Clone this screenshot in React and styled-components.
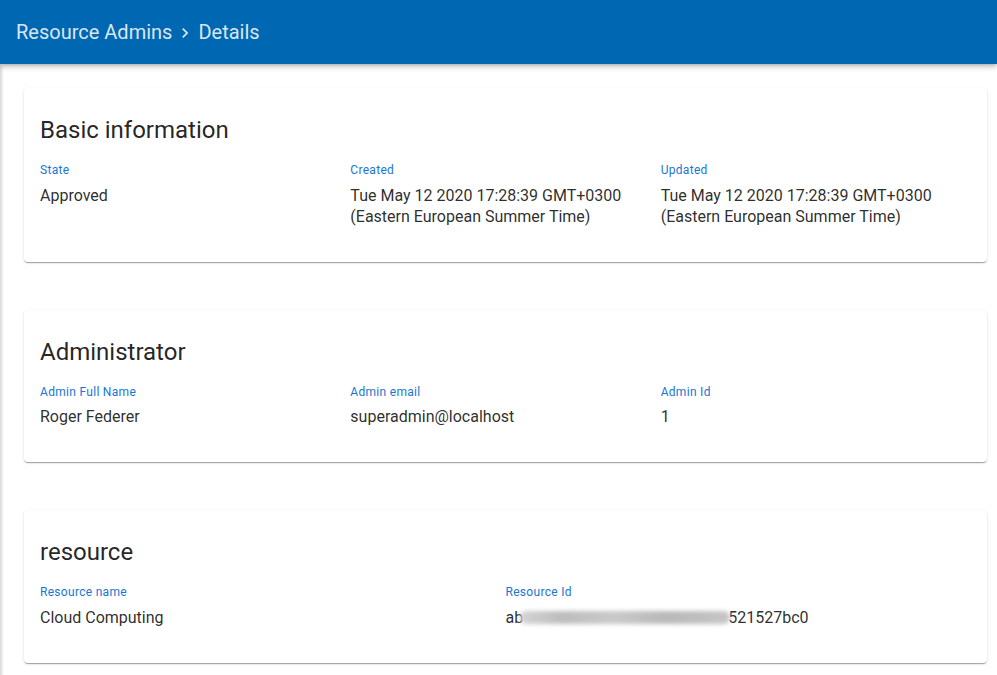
import React from "react";
import styled, { createGlobalStyle } from "styled-components";
import { MdChevronRight } from "react-icons/md";

const GlobalStyle = createGlobalStyle`
  html, body {
    margin: 0;
    padding: 0;
    background: #ffffff;
    font-family: Roboto, "Liberation Sans", Arial, sans-serif;
  }
`;

const sections = [
  {
    title: "Basic information",
    columns: 3,
    fields: [
      { label: "State", value: "Approved" },
      {
        label: "Created",
        value: "Tue May 12 2020 17:28:39 GMT+0300 (Eastern European Summer Time)",
      },
      {
        label: "Updated",
        value: "Tue May 12 2020 17:28:39 GMT+0300 (Eastern European Summer Time)",
      },
    ],
  },
  {
    title: "Administrator",
    columns: 3,
    fields: [
      { label: "Admin Full Name", value: "Roger Federer" },
      { label: "Admin email", value: "superadmin@localhost" },
      { label: "Admin Id", value: "1" },
    ],
  },
  {
    title: "resource",
    columns: 2,
    fields: [
      { label: "Resource name", value: "Cloud Computing" },
      { label: "Resource Id", hidden: true },
    ],
  },
];

const App = () => {
  return (
    <Page>
      <GlobalStyle />
      <AppBar>
        <Crumb>Resource Admins</Crumb>
        <Separator>
          <MdChevronRight size={20} />
        </Separator>
        <Crumb>Details</Crumb>
      </AppBar>
      <Main>
        {sections.map((section) => (
          <Card key={section.title}>
            <CardTitle>{section.title}</CardTitle>
            <FieldGrid columns={section.columns}>
              {section.fields.map((field) => (
                <Field key={field.label}>
                  <Label>{field.label}</Label>
                  {field.hidden ? (
                    <Value>
                      <span>ab</span>
                      <Redacted />
                      <span>521527bc0</span>
                    </Value>
                  ) : (
                    <Value>{field.value}</Value>
                  )}
                </Field>
              ))}
            </FieldGrid>
          </Card>
        ))}
      </Main>
    </Page>
  );
};

export default App;

const Page = styled.div`
  width: 100%;
  min-height: 100vh;
  display: flex;
  flex-direction: column;
`;

const AppBar = styled.header`
  height: 64px;
  background-color: #0067b2;
  display: flex;
  align-items: center;
  padding: 0 16px;
  color: rgba(255, 255, 255, 0.86);
  box-shadow: 0 2px 4px -1px rgba(0, 0, 0, 0.2), 0 4px 5px 0 rgba(0, 0, 0, 0.14);
  position: relative;
  z-index: 2;
`;

const Crumb = styled.span`
  font-size: 20px;
  font-weight: 400;
  line-height: 1;
`;

const Separator = styled.span`
  display: flex;
  align-items: center;
  margin: 2px 3px 0 3px;
`;

const Main = styled.main`
  flex: 1;
  display: flex;
  flex-direction: column;
  gap: 48px;
  padding: 24px 10px 24px 24px;
  box-shadow: inset 3px 0 3px -1px rgba(0, 0, 0, 0.16);
`;

const Card = styled.section`
  background: #ffffff;
  border-radius: 4px;
  padding: 26px 16px 35px;
  box-shadow: 0 2px 1px -1px rgba(0, 0, 0, 0.2), 0 1px 1px 0 rgba(0, 0, 0, 0.14),
    0 1px 3px 0 rgba(0, 0, 0, 0.12);
`;

const CardTitle = styled.h2`
  margin: 0 0 16px;
  font-size: 24px;
  font-weight: 400;
  line-height: 32px;
  color: rgba(0, 0, 0, 0.87);
`;

const FieldGrid = styled.div`
  display: grid;
  grid-template-columns: repeat(${(props) => props.columns}, 1fr);
`;

const Field = styled.div`
  display: flex;
  flex-direction: column;
  gap: 6.5px;
  padding-right: 16px;
`;

const Label = styled.span`
  font-size: 12px;
  line-height: 16px;
  letter-spacing: 0.3px;
  color: #1976d2;
`;

const Value = styled.span`
  font-size: 16px;
  line-height: 21px;
  color: rgba(0, 0, 0, 0.84);
  display: flex;
  align-items: center;
`;

const Redacted = styled.span`
  display: inline-block;
  width: 210px;
  height: 13px;
  margin: 1px -2px 0 -3px;
  border-radius: 6px;
  background: linear-gradient(
    90deg,
    #d4d4d4 0%,
    #bdbdbd 20%,
    #c9c9c9 45%,
    #b8b8b8 70%,
    #c6c6c6 100%
  );
  filter: blur(2px);
`;
